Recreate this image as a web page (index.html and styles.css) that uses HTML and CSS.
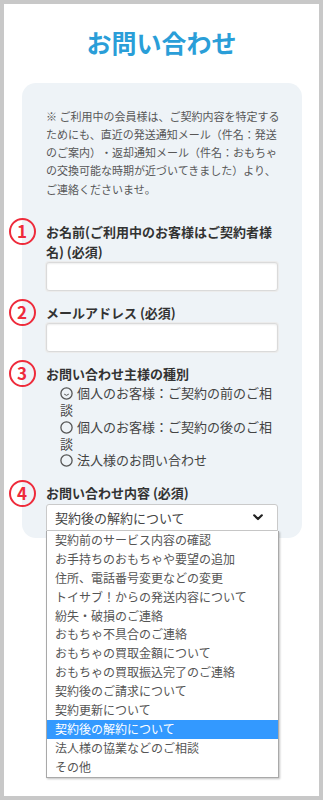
FILE: index.html
```html
<!DOCTYPE html>
<html lang="ja">
<head>
<meta charset="utf-8">
<title>お問い合わせ</title>
<link rel="stylesheet" href="styles.css">
</head>
<body>
<div class="page">
  <h1 class="title">お問い合わせ</h1>
  <div class="card">
    <p class="notice">※ ご利用中の会員様は、ご契約内容を特定するためにも、直近の発送通知メール（件名：発送のご案内）・返却通知メール（件名：おもちゃの交換可能な時期が近づいてきました）より、ご連絡くださいませ。</p>

    <div class="field">
      <span class="num">1</span>
      <div class="label">お名前(ご利用中のお客様はご契約者様名) (必須)</div>
      <input class="input" type="text">
    </div>

    <div class="field">
      <span class="num">2</span>
      <div class="label">メールアドレス (必須)</div>
      <input class="input" type="text">
    </div>

    <div class="field">
      <span class="num">3</span>
      <div class="label">お問い合わせ主様の種別</div>
      <div class="radios">
        <div class="option"><svg class="radio" viewBox="0 0 13 13"><circle cx="6.5" cy="6.5" r="5.6" fill="none" stroke="#555" stroke-width="1.3"/><path d="M4.2 7.1 Q6.5 9.6 8.8 7.1" fill="none" stroke="#555" stroke-width="1"/></svg>個人のお客様：ご契約の前のご相談</div>
        <div class="option"><svg class="radio" viewBox="0 0 13 13"><circle cx="6.5" cy="6.5" r="5.6" fill="none" stroke="#555" stroke-width="1.3"/></svg>個人のお客様：ご契約の後のご相談</div>
        <div class="option"><svg class="radio" viewBox="0 0 13 13"><circle cx="6.5" cy="6.5" r="5.6" fill="none" stroke="#555" stroke-width="1.3"/></svg>法人様のお問い合わせ</div>
      </div>
    </div>

    <div class="field">
      <span class="num">4</span>
      <div class="label">お問い合わせ内容 (必須)</div>
      <div class="select-wrap">
        <div class="select">
          <span>契約後の解約について</span>
          <svg class="chevron" viewBox="0 0 10 7"><path d="M1.2 1.3 L5 5 L8.8 1.3" fill="none" stroke="#222" stroke-width="2.2" stroke-linecap="round" stroke-linejoin="round"/></svg>
        </div>
        <ul class="options">
          <li>契約前のサービス内容の確認</li>
          <li>お手持ちのおもちゃや要望の追加</li>
          <li>住所、電話番号変更などの変更</li>
          <li>トイサブ！からの発送内容について</li>
          <li>紛失・破損のご連絡</li>
          <li>おもちゃ不具合のご連絡</li>
          <li>おもちゃの買取金額について</li>
          <li>おもちゃの買取振込完了のご連絡</li>
          <li>契約後のご請求について</li>
          <li>契約更新について</li>
          <li class="selected">契約後の解約について</li>
          <li>法人様の協業などのご相談</li>
          <li>その他</li>
        </ul>
      </div>
    </div>
  </div>
</div>
</body>
</html>
```

FILE: styles.css
```css
html, body {
  margin: 0;
  height: 100%;
}

body {
  background: #c8c8c8;
  padding: 4px;
  box-sizing: border-box;
  font-family: "Noto Sans CJK JP", "Noto Sans", sans-serif;
  text-spacing-trim: space-all;
  overflow: hidden;
}

.page {
  background: #fff;
  height: 100%;
  box-sizing: border-box;
  padding-top: 20px;
  overflow: hidden;
}

.title {
  margin: 0;
  text-align: center;
  font-size: 25px;
  line-height: 36px;
  font-weight: 700;
  color: #2a9ed8;
}

.card {
  margin: 23px 17px 0 18px;
  background: #eef3f7;
  border-radius: 14px;
  padding: 23.5px 24px 7px 24px;
}

.notice {
  margin: 0 -2px 0 0;
  font-size: 11px;
  line-height: 18.3px;
  color: #575757;
}

.field {
  display: grid;
  grid-template-columns: 26px 1fr;
  column-gap: 11px;
  align-items: start;
  margin-left: -37px;
  margin-top: 12px;
}

.notice + .field {
  margin-top: 24px;
}

.num {
  grid-column: 1;
  grid-row: 1;
  width: 27px;
  height: 27px;
  margin: -3.5px 0 -3.5px -0.5px;
  box-sizing: border-box;
  border: 2.8px solid #ee2b3b;
  border-radius: 50%;
  color: #ee2b3b;
  font-size: 17px;
  font-weight: 700;
  line-height: 21.4px;
  text-align: center;
}

.label {
  grid-column: 2;
  grid-row: 1;
  font-size: 13px;
  font-weight: 700;
  line-height: 20px;
  color: #333;
}

.input {
  grid-column: 2;
  grid-row: 2;
  display: block;
  width: 100%;
  height: 29px;
  margin: 0;
  box-sizing: border-box;
  background: #fff;
  border: 1px solid #dadada;
  border-radius: 3px;
  box-shadow: 0 0 0 1px #ececec, inset 0 1px 2px rgba(0, 0, 0, 0.07);
}

.radios {
  grid-column: 2;
  grid-row: 2;
  padding: 1.5px 0 2px 14px;
  font-size: 13px;
  line-height: 16.7px;
  color: #444;
}

.radio {
  width: 13px;
  height: 13px;
  margin-right: 4px;
  vertical-align: -2px;
}

.select-wrap {
  grid-column: 2;
  grid-row: 2;
  position: relative;
  margin-top: 1px;
}

.select {
  display: flex;
  align-items: center;
  justify-content: space-between;
  height: 27px;
  box-sizing: border-box;
  padding: 0 14px 0 8px;
  background: #fff;
  border: 1px solid #cacaca;
  border-radius: 3px 3px 0 0;
  font-size: 13px;
  color: #444;
}

.chevron {
  width: 10px;
  height: 7px;
}

.options {
  position: absolute;
  top: 100%;
  left: 0;
  width: 231px;
  margin: 0;
  padding: 0;
  list-style: none;
  background: #fff;
  border: 1px solid #a9a9a9;
  border-top: 0;
  box-shadow: 1px 1px 2px rgba(0, 0, 0, 0.25);
  font-size: 12px;
  color: #555;
  z-index: 2;
}

.options li {
  height: 18.9px;
  line-height: 18.9px;
  padding-left: 8px;
  white-space: nowrap;
}

.options .selected {
  background: #3399ff;
  color: #fff;
}
```
